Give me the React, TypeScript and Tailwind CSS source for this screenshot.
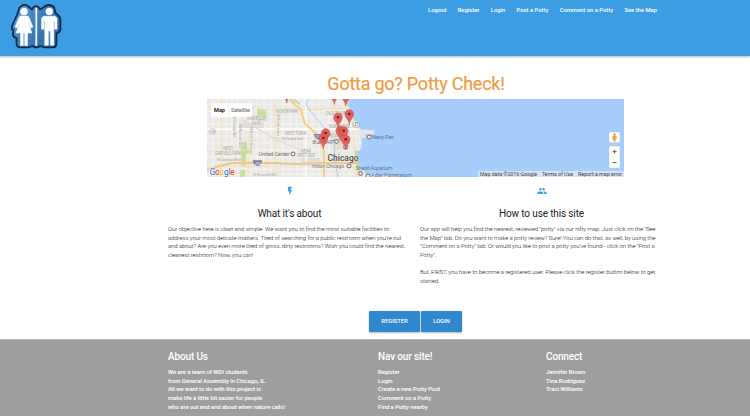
import React from "react";

const nav = ["Logout", "Register", "Login", "Post a Potty", "Comment on a Potty", "See the Map"];

const about = [
  <>Our objective here is <i className="tracking-[-0.2px]">clean</i> and simple. We want you to find the most suitable facilities to</>,
  "address your most delicate matters. Tired of searching for a public restroom when you're out",
  "and about? Are you even more tired of gross, dirty restrooms? Wish you could find the nearest,",
  "cleanest restroom? Now, you can!",
];

const usage = [
  "Our app will help you find the nearest, reviewed \"potty\" via our nifty map. Just click on the \"See",
  "the Map\" tab. Do you want to make a potty review? Sure! You can do that, as well, by using the",
  "\"Comment on a Potty\" tab. Or would you like to post a potty you've found-- click on the \"Post a",
  "Potty\".",
  "\u00a0",
  "But, FIRST, you have to become a registered user. Please click the register button below to get",
  "started.",
];

function Logo() {
  return (
    <svg className="block h-[56px] w-[70px]" viewBox="0 0 70 56">
      <defs>
        <linearGradient id="lg" x1="0" y1="0" x2="1" y2=".6">
          <stop offset="0" stopColor="#5a9fd6" />
          <stop offset="1" stopColor="#2866a5" />
        </linearGradient>
      </defs>
      <path
        d="M19.500 7.500Q24 3 28.500 6.500L32 9.500q1.500-3.500 4-3.500t4 3.500L44 7q5-4 10 0l1.500 6 4 3.500q1.300 2 1 4.500v8.500q-.5 3-4 4V43q0 4.300-3.500 4.500h-9L40 46q-3.500 3-7.500 0L28.500 47.500H20q-3.500-.5-3.500-4v-5.500q-4-1-3.500-4.500l.5-3q-2.500-1.500-1.500-4.500l5-11z"
        fill="url(#lg)" stroke="#0c2a49" strokeWidth="1.700" strokeLinejoin="round"
      />
      <g fill="#fff" stroke="#fff" strokeWidth=".5" strokeLinejoin="round">
        <circle cx="24" cy="11.500" r="3.500" />
        <path d="M20.500 16h7l1.300 1L33 27l-2.200 1-3.300-6.500 4.500 11.500h-4.500v12.500h-2.800V33h-1.400v12.500h-2.800V33H16l4.500-11.500L17.200 28 15 27l4.200-10z" />
        <circle cx="49.300" cy="11.500" r="3.500" />
        <path d="M43.500 16.200h11.600l2 2v11h-2.400v-8h-.8v24h-3.700V31h-1.800v14.200h-3.700v-24h-.8v8h-2.400v-11z" />
        <path d="M35.700 8h1.200v37.500h-1.200z" />
      </g>
    </svg>
  );
}

const pins = [[338, 117.300], [349.300, 114], [340.300, 130.500], [325.700, 133], [343.700, 130.700], [323.300, 138], [345.700, 139.300], [286.700, 92.500], [334.300, 94], [345.700, 95.500]];

function L({ x, y, w, s = 4.500, c = "#a19c97", b, children }: { x: number; y: number; w: number; s?: number; c?: string; b?: boolean; children: string }) {
  return (
    <text x={x} y={y} textLength={w} lengthAdjust="spacingAndGlyphs" fontSize={s} fill={c} fontWeight={b ? 500 : 400} stroke="#f5f3ef" strokeWidth=".5" paintOrder="stroke">
      {children}
    </text>
  );
}

function CityMap() {
  const h = [104, 111, 117, 124, 130, 136, 143, 150, 157, 169, 174];
  const v = [213, 219, 226, 232, 238, 250, 257, 264, 271, 283, 290, 297, 304, 312, 319, 329, 336, 343, 350, 355];
  return (
    <svg className="block h-[78px] w-[417px]" viewBox="207 99 417 78" fontFamily="Roboto, sans-serif">
      <path d="M207 99h417v78H207z" fill="#ebe9e5" />
      <g stroke="#f8f7f5" strokeWidth=".8">
        {h.map((y) => <path key={y} d={`M207 ${y}H362`} />)}
        {v.map((x) => <path key={x} d={`M${x} 99V177`} />)}
      </g>
      <g fill="#c5dfa1">
        <path d="M257 109h9v12h-9zM242 142h5v7h5v5h-6v12h-5v-12h-1zM240 170h5v7h-5zM289 99h6l5 4v2zM342 99h7l6 16 3 8-4-2-4-12zM354 150h4l3 14v8h-4z" />
      </g>
      <g fill="#e0ddd8"><path d="M239 123h25v5h-25zM302 158h18v8h-18zM334 130h16v20h-16z" /></g>
      <g fill="none" stroke="#f5e0ae" strokeWidth="1">
        <path d="M207 107h51M260 110h62M207 151l42-1M221 99v78M249 129v48M275 99v78M336 99v78M207 168l13-2h50M267 138h80M349 115l5 13 1 49" />
        <path d="M275 111l40-2 34-1M207 173h34M278 168v9" />
      </g>
      <g fill="none" stroke="#fff" strokeWidth="1.300"><path d="M207 129h150M306 99v78" /></g>
      <path d="M243 120l34 20 30 13" fill="none" stroke="#dcdad8" strokeWidth="1.200" />
      <path d="M289 99l12 11 4 14 11 9 3 7 5 10v27" fill="none" stroke="#f4cd88" strokeWidth="2" />
      <path d="M207 170q12-4 25-7h42l22 1 26-1h35" fill="none" stroke="#f3c680" strokeWidth="2.200" />
      <path d="M308 99q-4 5 1 10l12 15 11 12 2 9 2 21 2 11" fill="none" stroke="#a9cbf8" strokeWidth="1" />
      <path d="M347.500 99l2 9 3 7 4 5 2 7 3 3v18l-4 4-1 8 4 6v11h264V99z" fill="#a7cdfc" />
      <path d="M359 130h15v4h-9v4h-5zM356 172q6-5 9 0l2 3 8-1v3h-20zM376 175.500h24v1.500h-24z" fill="#e6e5df" />
      <g>
        <L x={276} y={112.500} w={22}>WICKER PARK</L>
        <L x={247} y={120} w={20}>HUMBOLDT</L>
        <L x={252} y={124.500} w={9}>PARK</L>
        <L x={285} y={135} w={21}>WEST TOWN</L>
        <L x={282} y={140} w={21} s={4}>W Grand Ave</L>
        <L x={223} y={150} w={10}>WEST</L>
        <L x={215} y={154.500} w={26}>GARFIELD PARK</L>
        <L x={217} y={160.500} w={24} s={4}>W Jackson Blvd</L>
        <L x={301} y={153} w={10}>NEAR</L>
        <L x={297} y={157} w={18}>WEST SIDE</L>
        <L x={253} y={176} w={23} s={4}>W Roosevelt Rd</L>
        <L x={326} y={115} w={21}>OLD TOWN</L>
        <L x={329} y={127.500} w={21}>NORTH SIDE</L>
        <L x={328} y={137} w={16}>RIVER</L>
        <L x={312.500} y={144} w={22} s={5.500} c="#6b6967">Blue MART</L>
        <g transform="rotate(90 233 117)"><L x={233} y={117} w={20} s={3.600}>N Pulaski Rd</L></g>
        <g transform="rotate(90 239 125)"><L x={239} y={125} w={23} s={3.600}>N Homan Ave</L></g>
        <g transform="rotate(90 250 127)"><L x={250} y={127} w={22} s={3.600}>N Kedzie Ave</L></g>
        <g transform="rotate(90 277 114)"><L x={277} y={114} w={22} s={3.600}>N Western Ave</L></g>
        <L x={259} y={156} w={30.500} s={5.800} c="#6d6663">United Center</L>
        <L x={312} y={168.200} w={32} s={5.500} c="#736c68">Hilton Chicago</L>
        <L x={327.500} y={160.800} w={31} s={8.400} c="#4d4b49" b>Chicago</L>
      </g>
      <g fill="#637b95">
        <text x="372" y="139.300" textLength="22" fontSize="6">Navy Pier</text>
        <text x="355.500" y="170" textLength="37" fontSize="5.500">Shedd Aquarium</text>
        <text x="371" y="177.300" textLength="41" fontSize="5.500">Adler Planetarium</text>
      </g>
      <g fill="#f4f2f0" stroke="#857b78" strokeWidth="1.100">
        {[[293, 154], [336.500, 141.500], [349, 166], [369.300, 137], [360.500, 173.500], [368, 176], [345.500, 147]].map(([x, y]) => <circle key={x} cx={x} cy={y} r="1.900" />)}
      </g>
      <circle cx="212.500" cy="131.500" r="3" fill="#fff" stroke="#aaa" strokeWidth=".7" />
      <text x="210.700" y="133" fontSize="3.800" fill="#777">50</text>
      <rect x="353" y="122.500" width="6" height="4.500" rx="1" fill="#fff" stroke="#999" strokeWidth=".7" />
      <text x="354.300" y="126.200" fontSize="3.500" fill="#555">41</text>
      {[[253, 160.500], [314, 134]].map(([x, y]) => (
        <g key={x}>
          <path d={`M${x} ${y}h9q-.5 5-4.500 5.500q-4-.5-4.500-5.500z`} fill="#5d82bd" />
          <path d={`M${x} ${y}h9v1h-9z`} fill="#bf6964" />
          <text x={x + 1.700} y={y + 4.200} fontSize="3.500" fill="#fff">290</text>
        </g>
      ))}
      {pins.map(([x, y]) => (
        <g key={`${x}-${y}`} transform={`translate(${x} ${y})`}>
          <path d="M0 10.500C-.5 5-4.300 4-4.300 0a4.300 4.300 0 1 1 8.600 0C4.300 4 .5 5 0 10.500z" fill="#e2605a" stroke="#b94a46" strokeWidth=".5" />
          <circle r="1.300" fill="#681c1c" />
        </g>
      ))}
      <g>
        <rect x="211" y="103.500" width="41" height="13.200" rx=".5" fill="#fff" />
        <path d="M228.500 104v12.500" stroke="#e6e6e6" strokeWidth=".6" />
        <text x="214" y="112" fontSize="5.600" fontWeight="700" textLength="11" fill="#222">Map</text>
        <text x="231" y="112" fontSize="5.600" textLength="19" fill="#666">Satellite</text>
      </g>
      <text x="209.500" y="174.800" fontSize="8.600" fontWeight="500" textLength="25" stroke="#fff" strokeWidth="1" paintOrder="stroke">
        <tspan fill="#4285f4">G</tspan><tspan fill="#ea4335">o</tspan><tspan fill="#fbbc05">o</tspan><tspan fill="#4285f4">g</tspan><tspan fill="#34a853">l</tspan><tspan fill="#ea4335">e</tspan>
      </text>
      <path d="M478 171h146v6H478z" fill="#d5e3f4" />
      <g fontSize="5.300" fill="#444">
        <text x="480" y="175.700" textLength="57">Map data ©2016 Google</text>
        <text x="542" y="175.700" textLength="31">Terms of Use</text>
        <text x="578" y="175.700" textLength="44">Report a map error</text>
      </g>
      <g fill="#fff" stroke="#98b9dc" strokeWidth=".3">
        <rect x="609" y="132" width="11" height="10.500" rx=".7" />
        <rect x="609" y="146" width="11" height="22" rx=".7" />
      </g>
      <circle cx="614.500" cy="134.700" r="1.400" fill="#e0ab3d" />
      <path d="M612.500 136h4l.3 3h-.9l-.4 2.500h-2l-.4-2.500h-.9z" fill="#e0ab3d" />
      <path d="M610.500 157h8" stroke="#e2e2e2" strokeWidth=".6" />
      <path d="M612.600 151.600h4M614.600 149.600v4M612.600 162.600h4" stroke="#666" strokeWidth="1" />
    </svg>
  );
}

function Column({ title, icon, lines }: { title: string; icon: React.ReactNode; lines: React.ReactNode[] }) {
  return (
    <div className="w-[243px]">
      <div className="flex h-[9px] justify-center">{icon}</div>
      <h5 className="mt-[12px] text-center text-[10px] leading-[13px] tracking-[-0.14px] text-[#212121]">{title}</h5>
      <div className="mt-[5px] text-[6px] font-light leading-[8.670px] tracking-[-0.095px] text-[#15151c]">
        {lines.map((l, i) => <p key={i} className="whitespace-nowrap">{l}</p>)}
      </div>
    </div>
  );
}

function FooterColumn({ title, lines, className }: { title: string; lines: string[]; className: string }) {
  return (
    <div className={className}>
      <h5 className="text-[10px] font-medium leading-[13px] tracking-[-0.14px]">{title}</h5>
      <ul className="mt-[5px] text-[5.900px] font-medium leading-[8.670px] tracking-[-0.045px]">
        {lines.map((l) => <li key={l} className="whitespace-nowrap">{l}</li>)}
      </ul>
    </div>
  );
}

export default function App() {
  return (
    <div className="h-[416px] w-[750px] overflow-hidden bg-white font-['Roboto',sans-serif]">
      <header className="flex h-[56px] justify-between bg-[#3d9de2] shadow-[0_1px_2px_rgba(0,0,0,.3)]">
        <Logo />
        <nav className="flex gap-[11.300px] pr-[93px] pt-[6px] text-[5.850px] font-medium leading-[9px] text-white">
          {nav.map((n) => <a key={n}>{n}</a>)}
        </nav>
      </header>
      <main className="h-[283px] pt-[18px]">
        <h1 className="pl-[82px] text-center text-[18px] leading-[20px] tracking-[-0.24px] text-[#ee9c46] [-webkit-text-stroke:0.2px_#ee9c46]">Gotta go? Potty Check!</h1>
        <div className="mt-[5px] pl-[207px]"><CityMap /></div>
        <div className="mt-[9px] flex h-[125px] gap-[9px] pl-[168px]">
          <Column title="What it's about" lines={about} icon={
            <svg className="h-[10px] w-[10px]" viewBox="0 0 24 24" fill="#35a9e8"><path d="M7 2v11h3v9l7-12h-4l4-8z" /></svg>
          } />
          <Column title="How to use this site" lines={usage} icon={
            <svg className="h-[10px] w-[10px]" viewBox="0 0 24 24" fill="#35a9e8"><path d="M16 11c1.660 0 2.990-1.340 2.990-3S17.660 5 16 5s-3 1.340-3 3 1.340 3 3 3zm-8 0c1.660 0 2.990-1.340 2.990-3S9.660 5 8 5 5 6.340 5 8s1.340 3 3 3zm0 2c-2.330 0-7 1.170-7 3.500V19h14v-2.500c0-2.330-4.670-3.500-7-3.500zm8 0c-.29 0-.62.020-.97.050 1.160.840 1.970 1.970 1.970 3.450V19h6v-2.500c0-2.330-4.670-3.500-7-3.500z" /></svg>
          } />
        </div>
        <div className="flex gap-[1px] pl-[369px] text-[5.780px] font-medium text-white">
          <button className="h-[21px] w-[51px] rounded-[1px] bg-[#2f87ce] shadow-[0_1px_2px_rgba(0,0,0,.3)]">REGISTER</button>
          <button className="h-[21px] w-[41px] rounded-[1px] bg-[#2f87ce] shadow-[0_1px_2px_rgba(0,0,0,.3)]">LOGIN</button>
        </div>
      </main>
      <footer className="flex h-[77px] border-t border-[#b5b5b5] bg-[#9e9e9e] pl-[168px] pt-[10px] text-white">
        <FooterColumn className="w-[210px]" title="About Us" lines={["We are a team of WDI students", "from General Assembly in Chicago, IL.", "All we want to do with this project is", "make life a little bit easier for people", "who are out and and about when nature calls!"]} />
        <FooterColumn className="w-[168px]" title="Nav our site!" lines={["Register", "Login", "Create a new Potty Post", "Comment on a Potty", "Find a Potty nearby"]} />
        <FooterColumn className="w-[150px]" title="Connect" lines={["Jennifer Brown", "Tina Rodriguez", "Traci Williams"]} />
      </footer>
    </div>
  );
}
